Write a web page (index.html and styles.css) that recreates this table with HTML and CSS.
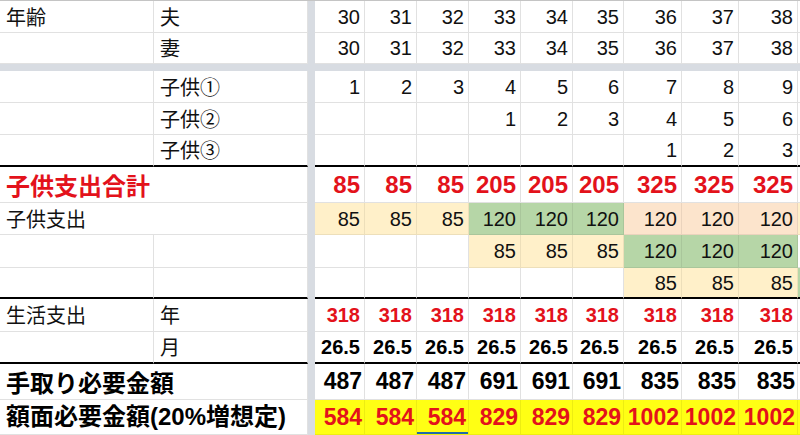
FILE: index.html
```html
<!DOCTYPE html>
<html lang="ja">
<head>
<meta charset="utf-8">
<title>子供支出シミュレーション</title>
<link rel="stylesheet" href="styles.css">
</head>
<body>
<div class="sheet">
  <div class="row h32">
    <div class="c lbl">年齢</div><div class="c lbl">夫</div><div class="band"></div>
    <div class="c num">30</div><div class="c num">31</div><div class="c num">32</div><div class="c num">33</div><div class="c num">34</div><div class="c num">35</div><div class="c num">36</div><div class="c num">37</div><div class="c num">38</div><div class="c edge"></div>
  </div>
  <div class="row h31">
    <div class="c lbl"></div><div class="c lbl">妻</div><div class="band"></div>
    <div class="c num">30</div><div class="c num">31</div><div class="c num">32</div><div class="c num">33</div><div class="c num">34</div><div class="c num">35</div><div class="c num">36</div><div class="c num">37</div><div class="c num">38</div><div class="c edge"></div>
  </div>
  <div class="hband"></div>
  <div class="row h32">
    <div class="c lbl"></div><div class="c lbl">子供①</div><div class="band"></div>
    <div class="c num">1</div><div class="c num">2</div><div class="c num">3</div><div class="c num">4</div><div class="c num">5</div><div class="c num">6</div><div class="c num">7</div><div class="c num">8</div><div class="c num">9</div><div class="c edge"></div>
  </div>
  <div class="row h32">
    <div class="c lbl"></div><div class="c lbl">子供②</div><div class="band"></div>
    <div class="c num"></div><div class="c num"></div><div class="c num"></div><div class="c num">1</div><div class="c num">2</div><div class="c num">3</div><div class="c num">4</div><div class="c num">5</div><div class="c num">6</div><div class="c edge"></div>
  </div>
  <div class="row h32 bb">
    <div class="c lbl"></div><div class="c lbl">子供③</div><div class="band"></div>
    <div class="c num"></div><div class="c num"></div><div class="c num"></div><div class="c num"></div><div class="c num"></div><div class="c num"></div><div class="c num">1</div><div class="c num">2</div><div class="c num">3</div><div class="c edge"></div>
  </div>
  <div class="row h36 total">
    <div class="c lbl span2">子供支出合計</div><div class="band"></div>
    <div class="c num">85</div><div class="c num">85</div><div class="c num">85</div><div class="c num">205</div><div class="c num">205</div><div class="c num">205</div><div class="c num">325</div><div class="c num">325</div><div class="c num">325</div><div class="c edge"></div>
  </div>
  <div class="row h32">
    <div class="c lbl span2">子供支出</div><div class="band"></div>
    <div class="c num fy">85</div><div class="c num fy">85</div><div class="c num fy">85</div><div class="c num fg">120</div><div class="c num fg">120</div><div class="c num fg">120</div><div class="c num fp">120</div><div class="c num fp">120</div><div class="c num fp">120</div><div class="c edge fy"></div>
  </div>
  <div class="row h33">
    <div class="c lbl"></div><div class="c lbl"></div><div class="band"></div>
    <div class="c num"></div><div class="c num"></div><div class="c num"></div><div class="c num fy">85</div><div class="c num fy">85</div><div class="c num fy">85</div><div class="c num fg">120</div><div class="c num fg">120</div><div class="c num fg">120</div><div class="c edge"></div>
  </div>
  <div class="row h31 bb">
    <div class="c lbl"></div><div class="c lbl"></div><div class="band"></div>
    <div class="c num"></div><div class="c num"></div><div class="c num"></div><div class="c num"></div><div class="c num"></div><div class="c num"></div><div class="c num fy">85</div><div class="c num fy">85</div><div class="c num fy">85</div><div class="c edge fg"></div>
  </div>
  <div class="row h33 living">
    <div class="c lbl">生活支出</div><div class="c lbl">年</div><div class="band"></div>
    <div class="c num">318</div><div class="c num">318</div><div class="c num">318</div><div class="c num">318</div><div class="c num">318</div><div class="c num">318</div><div class="c num">318</div><div class="c num">318</div><div class="c num">318</div><div class="c edge"></div>
  </div>
  <div class="row h32 bb monthly">
    <div class="c lbl"></div><div class="c lbl">月</div><div class="band"></div>
    <div class="c num">26.5</div><div class="c num">26.5</div><div class="c num">26.5</div><div class="c num">26.5</div><div class="c num">26.5</div><div class="c num">26.5</div><div class="c num">26.5</div><div class="c num">26.5</div><div class="c num">26.5</div><div class="c edge"></div>
  </div>
  <div class="row h36 net">
    <div class="c lbl span2">手取り必要金額</div><div class="band"></div>
    <div class="c num">487</div><div class="c num">487</div><div class="c num">487</div><div class="c num">691</div><div class="c num">691</div><div class="c num">691</div><div class="c num">835</div><div class="c num">835</div><div class="c num">835</div><div class="c edge"></div>
  </div>
  <div class="row h35 gross">
    <div class="c lbl span2">額面必要金額(20%増想定)</div><div class="band"></div>
    <div class="c num fyl">584</div><div class="c num fyl">584</div><div class="c num fyl sel">584</div><div class="c num fyl">829</div><div class="c num fyl">829</div><div class="c num fyl">829</div><div class="c num fyl">1002</div><div class="c num fyl">1002</div><div class="c num fyl">1002</div><div class="c edge fyl"></div>
  </div>
</div>
</body>
</html>
```
FILE: styles.css
```css
html, body {
  margin: 0;
  padding: 0;
  background: #ffffff;
  overflow: hidden;
}

.sheet {
  width: 800px;
  height: 435px;
  border-top: 1px solid #c4c4c4;
  box-sizing: border-box;
  display: flex;
  flex-direction: column;
  font-family: "Liberation Sans", "Noto Sans CJK JP", Arial, sans-serif;
  font-size: 20px;
  color: #111;
  overflow: hidden;
}

.row {
  display: grid;
  grid-template-columns: 154px 154px 7px 50px 52px 52px 52px 52px 51px 58px 57px 59px 2px;
  flex: none;
}

.h31 { height: 31px; }
.h32 { height: 32px; }
.h33 { height: 33px; }
.h35 { height: 35px; }
.h36 { height: 36px; }

.c {
  box-sizing: border-box;
  border-right: 1px solid #e1e1e1;
  border-bottom: 1px solid #e1e1e1;
  display: flex;
  align-items: center;
  white-space: nowrap;
  overflow: hidden;
  line-height: 1;
}

.lbl {
  padding-left: 6px;
  font-family: "Noto Sans CJK JP", "Liberation Sans", sans-serif;
}

.gross .lbl {
  font-family: "Liberation Sans", "Noto Sans CJK JP", sans-serif;
}

.span2 {
  grid-column: span 2;
}

.num {
  justify-content: flex-end;
  padding-right: 4px;
}

.edge {
  border-right: none;
}

.band {
  background: #d8dce2;
}

.hband {
  height: 7px;
  flex: none;
  background: #d8dce2;
}

.bb .c {
  border-bottom: 2px solid #000;
}

.fy { background: #fff0c9; }
.fg { background: #b6d6a7; }
.fp { background: #fce4cc; }
.fyl { background: #ffff14; }

.fy, .fg, .fp, .fyl {
  border-color: rgba(0, 0, 0, 0.07);
}

.total .c {
  color: #e3121b;
  font-weight: bold;
  font-size: 24px;
}

.living .num {
  color: #e3121b;
  font-weight: bold;
}

.monthly .num {
  font-weight: bold;
  color: #000;
}

.net .c,
.gross .c {
  font-weight: bold;
  color: #000;
}

.net .lbl,
.gross .lbl {
  font-size: 24px;
}

.net .num,
.gross .num {
  font-size: 23px;
  padding-right: 2px;
}

.gross .num {
  color: #e3121b;
}

.sel {
  overflow: visible;
  box-shadow: inset 0 -2px 0 #1f6aa8;
}
```
